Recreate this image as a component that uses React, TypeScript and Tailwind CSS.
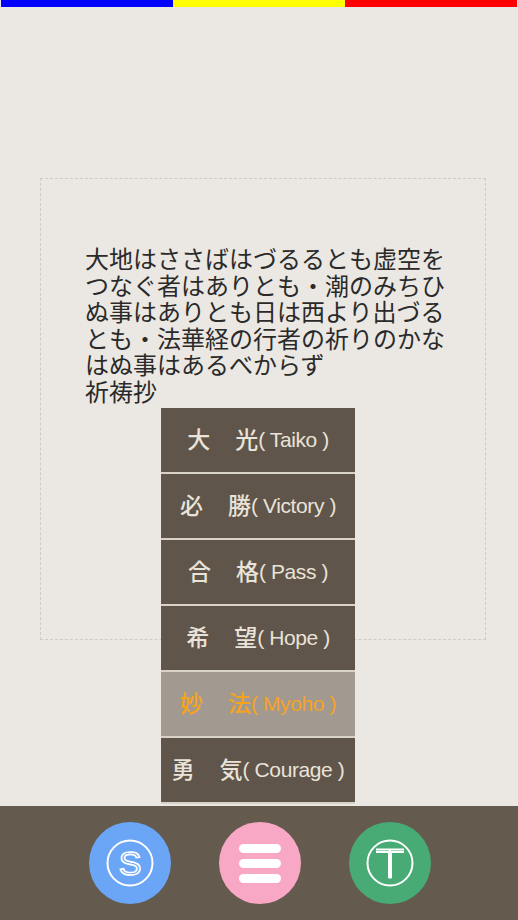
import React from "react";

const items = [
  { a: "大", b: "光", en: "Taiko" },
  { a: "必", b: "勝", en: "Victory" },
  { a: "合", b: "格", en: "Pass" },
  { a: "希", b: "望", en: "Hope" },
  { a: "妙", b: "法", en: "Myoho", active: true },
  { a: "勇", b: "気", en: "Courage" },
];

const font = {
  fontFamily: '"Liberation Sans", "Noto Sans CJK JP", sans-serif',
};

export default function App() {
  return (
    <div
      className="flex h-[920px] w-full flex-col overflow-hidden bg-[#ebe8e3]"
      style={font}
    >
      {/* colour bar */}
      <div className="flex h-[7px] px-[1px]">
        <div className="flex-1 bg-[#0000ff]" />
        <div className="flex-1 bg-[#ffff00]" />
        <div className="flex-1 bg-[#ff0000]" />
      </div>

      {/* main */}
      <div className="relative flex-1">
        <div className="ml-[40px] mt-[171px] h-[462px] w-[446px] border border-dashed border-[#cfcac3] pl-[44px] pt-[68px]">
          <p className="text-[24px] leading-[26.5px] text-[#2a2a2a]">
            大地はささばはづるるとも虚空を
            <br />
            つなぐ者はありとも・潮のみちひ
            <br />
            ぬ事はありとも日は西より出づる
            <br />
            とも・法華経の行者の祈りのかな
            <br />
            はぬ事はあるべからず
            <br />
            祈祷抄
          </p>
        </div>

        {/* dropdown menu */}
        <div className="absolute left-[161px] top-[401px] w-[194px]">
          {items.map((it) => (
            <div
              key={it.en}
              className={`flex h-[66px] items-center justify-center border-b-2 border-[#d9d2c7] text-[21px] ${
                it.active
                  ? "bg-[#a29a91] text-[#f5a31f]"
                  : "bg-[#5f554a] text-[#e9e3d9]"
              }`}
            >
              <span className="text-[23px] font-medium">{it.a}</span>
              <span className="ml-[25px] text-[23px] font-medium">{it.b}</span>
              <span className="tracking-[-0.4px]">( {it.en} )</span>
            </div>
          ))}
        </div>
      </div>

      {/* footer */}
      <div className="flex h-[114px] items-center justify-center gap-[48px] bg-[#645a4e] pl-[1px]">
        <div className="flex h-[82px] w-[82px] items-center justify-center rounded-full bg-[#6aa5f6]">
          <svg width="50" height="50" viewBox="0 0 50 50">
            <circle cx="25" cy="25" r="22.5" fill="none" stroke="#fff" strokeWidth="2" />
            <text
              x="25"
              y="37"
              textAnchor="middle"
              fontSize="34"
              fill="none"
              stroke="#fff"
              strokeWidth="1.6"
              style={{ fontFamily: '"Liberation Sans", sans-serif' }}
            >
              S
            </text>
          </svg>
        </div>
        <div className="flex h-[82px] w-[82px] flex-col items-center justify-center gap-[6px] rounded-full bg-[#f8a8c4]">
          <div className="h-[9px] w-[42px] rounded-full bg-white" />
          <div className="h-[9px] w-[42px] rounded-full bg-white" />
          <div className="h-[9px] w-[42px] rounded-full bg-white" />
        </div>
        <div className="flex h-[82px] w-[82px] items-center justify-center rounded-full bg-[#48ab76]">
          <svg width="50" height="50" viewBox="0 0 50 50">
            <circle cx="25" cy="25" r="22.5" fill="none" stroke="#fff" strokeWidth="2" />
            <path d="M11 11.5 H39 M11 14 H39 M25 12 V40" stroke="#fff" strokeWidth="2" fill="none" />
            <path d="M23.5 14 V40 H26.5 V14" stroke="#fff" strokeWidth="1" fill="none" />
          </svg>
        </div>
      </div>
    </div>
  );
}
